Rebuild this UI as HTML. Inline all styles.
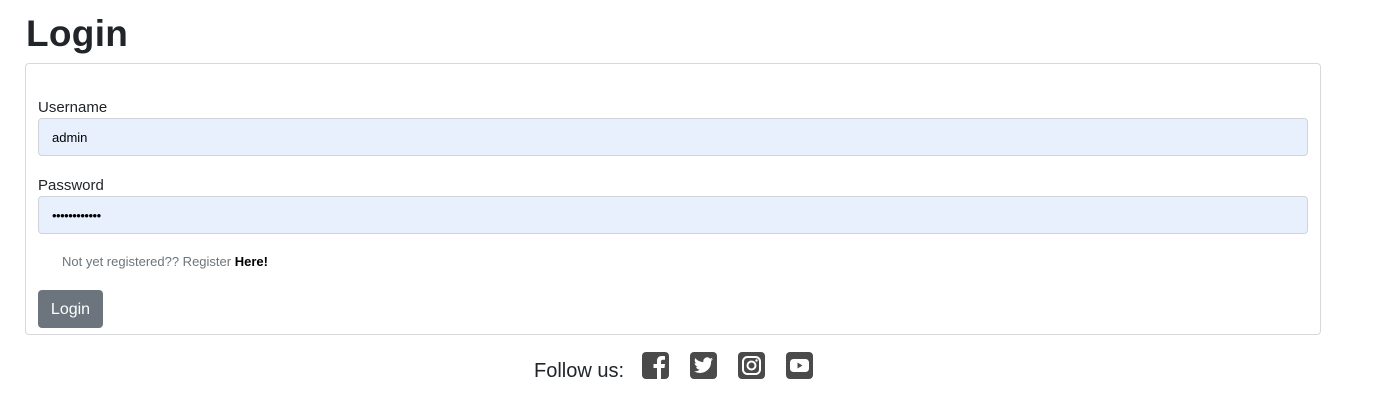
<!DOCTYPE html>
<html><head><meta charset="utf-8"><style>
body{margin:0;width:1376px;height:404px;background:#fff;font-family:"Liberation Sans",sans-serif;color:#212529;position:relative;overflow:hidden}
h1{position:absolute;left:26px;top:10px;margin:0;font-size:37px;font-weight:bold;line-height:48px;letter-spacing:0.3px}
.card{position:absolute;left:25px;top:63px;width:1294px;height:270px;border:1px solid #d6d8db;border-radius:4px}
.lbl{position:absolute;left:38px;font-size:15px;color:#212529}
.inp{position:absolute;left:38px;width:1270px;height:38px;background:#e8f0fe;border:1px solid #ced4da;border-radius:4px;box-sizing:border-box;font-size:13px;line-height:38px;padding-left:13px;color:#000}
.reg{position:absolute;left:62px;top:254px;font-size:13px;color:#6c757d}
.reg b{color:#000}
.btn{position:absolute;left:38px;top:290px;width:65px;height:38px;background:#6c757d;border-radius:4px;color:#fff;font-size:16px;line-height:39px;text-align:center}
.follow{position:absolute;left:534px;top:360px;font-size:20px;color:#212529}
.ic{position:absolute;top:352px;width:27px;height:27px;background:#4a4a4a;border-radius:4px}
</style></head><body>
<h1>Login</h1>
<div class="card"></div>
<div class="lbl" style="top:99px">Username</div>
<div class="inp" style="top:118px">admin</div>
<div class="lbl" style="top:177px">Password</div>
<div class="inp" style="top:196px;font-size:13px;letter-spacing:-0.5px">••••••••••••</div>
<div class="reg">Not yet registered?? Register <b>Here!</b></div>
<div class="btn">Login</div>
<div class="follow">Follow us:</div>
<svg class="ic" style="left:642px" viewBox="0 0 27 27"><path d="M15 27V16h-3.5v-4H15V9c0-3.5 2-5 5-5 1.4 0 2.5.1 3 .2v3.5h-2c-1.5 0-2 .8-2 2V12h4l-.5 4H19v11z" fill="#fff"/></svg>
<svg class="ic" style="left:690px" viewBox="0 0 27 27"><g transform="translate(-3.2 -3.5) scale(1.25)"><path d="M21 8.5c-.6.3-1.2.4-1.8.5.7-.4 1.1-1 1.4-1.7-.6.4-1.3.6-2 .8a3.1 3.1 0 0 0-5.3 2.8C10.7 10.8 8.4 9.6 6.8 7.7c-.9 1.5-.4 3.3.9 4.2-.5 0-1-.2-1.4-.4 0 1.5 1.1 2.8 2.5 3.1-.5.1-1 .2-1.4.1.4 1.3 1.6 2.2 2.9 2.2A6.3 6.3 0 0 1 5.8 18.2 8.9 8.9 0 0 0 19.5 10.3V9.9c.6-.4 1.1-.9 1.5-1.4z" fill="#fff"/></g></svg>
<svg class="ic" style="left:738px" viewBox="0 0 27 27"><rect x="5" y="5" width="17" height="17" rx="4.5" fill="none" stroke="#fff" stroke-width="2"/><circle cx="13.5" cy="13.5" r="4" fill="none" stroke="#fff" stroke-width="2"/><circle cx="18.5" cy="8.5" r="1.2" fill="#fff"/></svg>
<svg class="ic" style="left:786px" viewBox="0 0 27 27"><rect x="4" y="7" width="19" height="13" rx="3.5" fill="#fff"/><path d="M11.5 10.5v6l5-3z" fill="#4a4a4a"/></svg>
</body></html>
